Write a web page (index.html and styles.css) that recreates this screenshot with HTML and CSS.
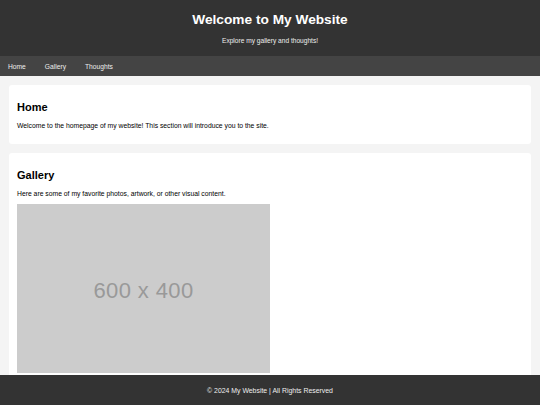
FILE: index.html
```html
<!DOCTYPE html>
<html lang="en">

<head>
    <meta charset="UTF-8">
    <meta name="viewport" content="width=device-width, initial-scale=1.0">
    <title>My Website</title>
    <link rel="stylesheet" href="styles.css">
</head>

<body>
    <header>
        <h1>Welcome to My Website</h1>
        <p>Explore my gallery and thoughts!</p>
    </header>

    <nav>
        <a href="#home">Home</a>
        <a href="#gallery">Gallery</a>
        <a href="#thoughts">Thoughts</a>
    </nav>

    <main>
        <section id="home" class="card">
            <h2>Home</h2>
            <p>Welcome to the homepage of my website! This section will introduce you to the site.</p>
        </section>

        <section id="gallery" class="card">
            <h2>Gallery</h2>
            <p>Here are some of my favorite photos, artwork, or other visual content.</p>
            <div class="placeholder">600 x 400</div>
        </section>
    </main>

    <footer>
        <p>&copy; 2024 My Website | All Rights Reserved</p>
    </footer>
</body>

</html>
```

FILE: styles.css
```css
body {
    margin: 0;
    font-family: "Liberation Sans", Arial, sans-serif;
    background: #f4f4f4;
    color: #000;
}

header {
    background: #333;
    color: white;
    text-align: center;
    padding: 12px 0 10px;
    height: 34px;
}

header h1 {
    margin: 0;
    font-size: 13.7px;
}

header p {
    margin: 10px 0 0;
    font-size: 6.6px;
    color: #eee;
}

nav {
    background: #444;
    height: 20px;
    display: flex;
    align-items: center;
    padding: 0 8px;
    gap: 19px;
}

nav a {
    color: #eee;
    text-decoration: none;
    font-size: 6.7px;
}

main {
    padding: 9px 9px 40px;
    display: flex;
    flex-direction: column;
    gap: 9px;
}

.card {
    background: white;
    border-radius: 3px;
    padding: 8px 8px 8px;
}

.card h2 {
    margin: 8px 0 9px;
    font-size: 11px;
}

.card p {
    margin: 0 0 7px;
    font-size: 6.8px;
}

/* grey box standing in for the gallery picture */
.placeholder {
    width: 253px;
    height: 169px;
    box-sizing: border-box;
    padding-top: 4px;
    background: #ccc;
    color: #999;
    font-size: 22px;
    letter-spacing: 0.4px;
    display: flex;
    align-items: center;
    justify-content: center;
}

footer {
    position: fixed;
    left: 0;
    right: 0;
    bottom: 0;
    height: 30px;
    background: #333;
    color: #eee;
    display: flex;
    align-items: center;
    justify-content: center;
}

footer p {
    margin: 0;
    font-size: 6.9px;
}
```
